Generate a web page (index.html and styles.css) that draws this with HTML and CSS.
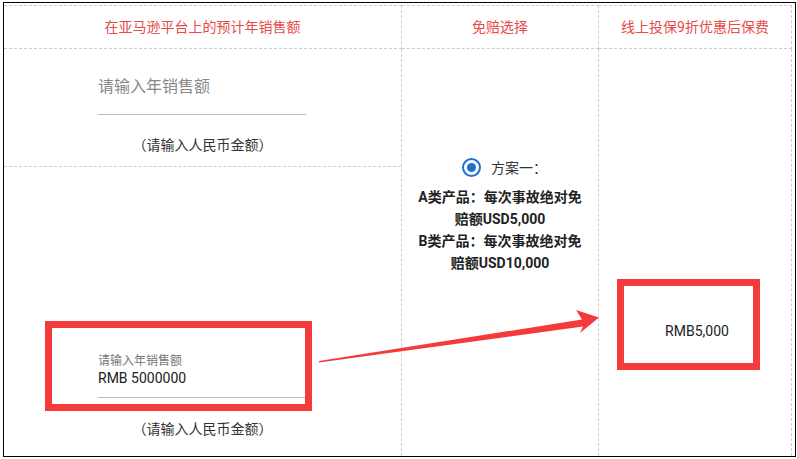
FILE: index.html
```html
<!DOCTYPE html>
<html>
  <head>
    <title>预计年销售额与保费</title>
    <link rel="stylesheet" href="styles.css">
  </head>
  <body>
    <div class="frame">
      <div class="sheet">
        <div class="head">在亚马逊平台上的预计年销售额</div>
        <div class="head">免赔选择</div>
        <div class="head">线上投保9折优惠后保费</div>

        <div class="sales">
          <div class="sales-cell first">
            <div class="field empty">
              <span class="placeholder">请输入年销售额</span>
            </div>
            <div class="note">（请输入人民币金额）</div>
          </div>
          <div class="sales-cell second">
            <div class="field filled">
              <span class="float-label">请输入年销售额</span>
              <span class="value">RMB 5000000</span>
            </div>
            <div class="note">（请输入人民币金额）</div>
          </div>
        </div>

        <div class="plan">
          <label class="choice">
            <span class="radio checked"></span>
            <span>方案一：</span>
          </label>
          <div class="plan-text">
            <p>A类产品：每次事故绝对免赔额USD5,000</p>
            <p>B类产品：每次事故绝对免赔额USD10,000</p>
          </div>
        </div>

        <div class="premium">RMB5,000</div>
      </div>

      <!-- annotation marks drawn over the table -->
      <svg class="marks" width="797" height="459" viewBox="0 0 797 459">
        <rect x="48.5" y="324.5" width="260" height="83" />
        <rect x="620.5" y="282.5" width="136" height="84" />
        <polygon class="arrow" points="319,361 582,319.5 576,310 599,317.5 580,333 583,326.5 319,362.5" />
      </svg>
    </div>
  </body>
</html>
```

FILE: styles.css
```css
body {
  margin: 0;
  font-family: Roboto, "Noto Sans CJK SC", sans-serif;
  color: #333;
  background: #fff;
}
.frame {
  position: relative;
  box-sizing: border-box;
  width: 793px;
  height: 455px;
  margin: 2px 0 0 3px;
  border: 1px solid #000;
  overflow: hidden;
}
.sheet {
  display: grid;
  grid-template-columns: 398px 197px 193px;
  grid-template-rows: 44px 1fr;
  padding-top: 2px;
  height: 100%;
  box-sizing: border-box;
}
.head {
  box-sizing: border-box;
  border-top: 1px dashed #ccc;
  border-bottom: 1px dashed #ccc;
  border-right: 1px dashed #ccc;
  text-align: center;
  font-size: 14px;
  line-height: 42px;
  color: #e84a4a;
}

/* sales column */
.sales {
  border-right: 1px dashed #ccc;
}
.sales-cell {
  box-sizing: border-box;
}
.sales-cell.first {
  height: 118px;
  border-bottom: 1px dashed #ccc;
  padding-top: 26px;
}
.sales-cell.second {
  padding-top: 187px;
}
.field {
  width: 208px;
  margin: 0 0 0 94px;
  border-bottom: 1px solid #bdbdbd;
}
.field.empty {
  height: 39px;
}
.field.filled {
  height: 43px;
}
.placeholder {
  display: block;
  font-size: 16px;
  line-height: 24px;
  color: #888;
}
.float-label {
  display: block;
  font-size: 12px;
  line-height: 14px;
  color: #777;
}
.value {
  display: block;
  font-size: 14px;
  line-height: 20px;
  color: #212121;
}
.note {
  margin-top: 20px;
  text-align: center;
  font-size: 14px;
  line-height: 20px;
  color: #333;
}
.sales-cell.second .note {
  margin-top: 21px;
}

/* plan column */
.plan {
  border-right: 1px dashed #ccc;
  padding: 108px 14px 0;
  text-align: center;
}
.choice {
  display: flex;
  justify-content: center;
  align-items: center;
  gap: 10px;
  padding-left: 9px;
  height: 20px;
  font-size: 14px;
  color: #333;
}
.radio {
  box-sizing: border-box;
  width: 19px;
  height: 19px;
  border: 2px solid #1f6fd2;
  border-radius: 50%;
  display: flex;
  align-items: center;
  justify-content: center;
}
.radio.checked::after {
  content: "";
  width: 9px;
  height: 9px;
  border-radius: 50%;
  background: #1f6fd2;
}
.plan-text {
  margin-top: 9px;
  font-size: 14px;
  font-weight: bold;
  line-height: 22px;
  color: #222;
}
.plan-text p {
  margin: 0;
}

/* premium column */
.premium {
  border-right: 1px dashed #ccc;
  padding: 272px 0 0 4px;
  text-align: center;
  font-size: 14px;
  line-height: 20px;
  color: #222;
}

.marks {
  position: absolute;
  left: -4px;
  top: -3px;
  pointer-events: none;
}
.marks rect {
  fill: none;
  stroke: #f43a3a;
  stroke-width: 7;
}
.marks .arrow {
  fill: #f43a3a;
}
```
